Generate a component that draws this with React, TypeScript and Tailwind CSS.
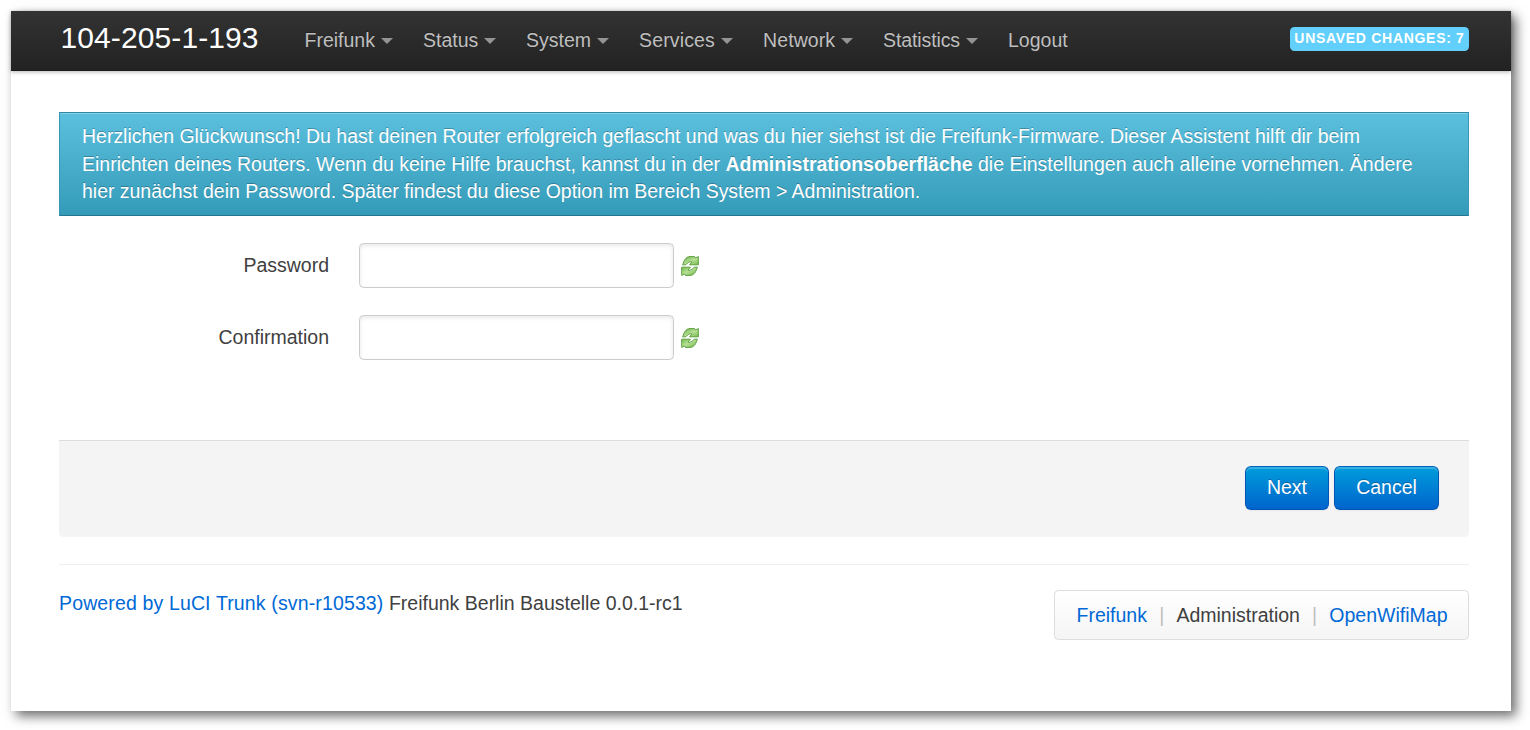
const menu = [
  { label: 'Freifunk', width: 'w-[118.500px]', tracking: '' },
  { label: 'Status', width: 'w-[103px]', tracking: '' },
  { label: 'System', width: 'w-[113px]', tracking: '' },
  { label: 'Services', width: 'w-[124px]', tracking: 'tracking-[0.150px]' },
  { label: 'Network', width: 'w-[120px]', tracking: 'tracking-[0.100px]' },
  { label: 'Statistics', width: 'w-[125px]', tracking: 'tracking-[-0.100px]' },
];

function Refresh() {
  const arrow = 'M1.600 8.800L3.400 4.400C4.600 2 6.300.7 9 .6H13.600L14.600 1.900L17.300.6V8.800H8.600L11 5.900C8.800 5.300 7 6.200 4.800 8.800z';
  return (
    <svg className="ml-[7px] h-[20px] w-[18px]" viewBox="0 0 18 20">
      <defs>
        <linearGradient id="leaf" x1="0" y1="0" x2="1" y2="1">
          <stop offset="0" stopColor="#6fb14b" />
          <stop offset=".55" stopColor="#b5e094" />
          <stop offset="1" stopColor="#74b94a" />
        </linearGradient>
      </defs>
      <g fill="url(#leaf)" stroke="#5f9f42" strokeWidth="1" strokeLinejoin="round">
        <path d={arrow} />
        <path d={arrow} transform="rotate(180 9 10)" />
      </g>
    </svg>
  );
}

function Field({ label }: { label: string }) {
  return (
    <div className="flex h-[45px] items-center">
      <label className="w-[270px] text-right">{label}</label>
      <input
        type="password"
        aria-label={label}
        className="ml-[30px] h-[45px] w-[315px] rounded-[4.500px] border border-[#ccc] bg-white px-2 shadow-[inset_0_1.500px_4.500px_rgba(0,0,0,0.100)] outline-none"
      />
      <Refresh />
    </div>
  );
}

function Button({ children, width }: { children: string; width: string }) {
  return (
    <button
      className={`${width} h-11 rounded-md border border-[#0055b5] border-t-[#0062bb] bg-linear-to-b from-[#049cdb] to-[#0064cd] pb-[2px] text-white shadow-[inset_0_2px_0_rgba(255,255,255,0.200),0_1px_2px_rgba(0,0,0,0.050)] [text-shadow:0_-1px_0_rgba(0,0,0,0.250)]`}
    >
      {children}
    </button>
  );
}

export default function App() {
  return (
    <div className="h-[730px] w-[1530px] overflow-hidden bg-white p-[11px] font-['Liberation_Sans',sans-serif] text-[19.500px] leading-[27px] text-[#404040]">
      <div className="h-[700px] w-[1500px] bg-white shadow-[5px_5px_11px_rgba(0,0,0,0.580)]">
        <header className="flex h-[60px] items-center bg-linear-to-b from-[#333] to-[#222] pr-[42px] pl-[49.500px] shadow-[0_1px_4px_rgba(0,0,0,0.300),inset_0_-1px_0_rgba(0,0,0,0.150)]">
          <h1 className="w-[244px] pb-[6px] text-[30px] leading-[30px] tracking-[0.100px] whitespace-nowrap text-white">104-205-1-193</h1>
          <nav className="flex pb-[2px] text-[#bfbfbf] [text-shadow:0_-1px_0_rgba(0,0,0,0.250)]">
            {menu.map(({ label, width, tracking }) => (
              <a key={label} className={`flex items-center ${width} ${tracking}`}>
                {label}
                <span className="mt-[2px] ml-[6px] h-0 w-0 border-x-[6px] border-t-[6px] border-x-transparent border-t-[#949494]" />
              </a>
            ))}
            <a>Logout</a>
          </nav>
          <span className="mb-[4px] ml-auto h-6 w-[179px] rounded-[4.500px] bg-[#62cffc] text-center text-[14px] leading-[23px] font-bold tracking-[0.700px] whitespace-nowrap text-white">
            UNSAVED CHANGES: 7
          </span>
        </header>

        <main className="ml-[48px] w-[1410px] pt-[41px]">
          <div className="h-[104px] border border-[#3596b5] border-t-[#2e87a3] border-b-[#22788f] bg-linear-to-b from-[#5bc0de] to-[#339bb9] pt-[10px] pl-[22px] leading-[27.500px] whitespace-nowrap text-white shadow-[inset_0_1px_0_rgba(255,255,255,0.250)] [text-shadow:0_-1px_0_rgba(0,0,0,0.250)]">
            <p className="tracking-[-0.014px]">Herzlichen Glückwunsch! Du hast deinen Router erfolgreich geflascht und was du hier siehst ist die Freifunk-Firmware. Dieser Assistent hilft dir beim</p>
            <p>Einrichten deines Routers. Wenn du keine Hilfe brauchst, kannst du in der <strong>Administrationsoberfläche</strong> die Einstellungen auch alleine vornehmen. Ändere</p>
            <p className="tracking-[-0.025px]">hier zunächst dein Password. Später findest du diese Option im Bereich System &gt; Administration.</p>
          </div>

          <form className="flex flex-col gap-[27px] pt-[27px]">
            <Field label="Password" />
            <Field label="Confirmation" />
          </form>

          <div className="mt-20 flex h-[97px] justify-end gap-[5px] rounded-b-[4.500px] border-t border-[#ddd] bg-[#f4f4f4] pt-[25px] pr-[30px]">
            <Button width="w-[84px]">Next</Button>
            <Button width="w-[105px]">Cancel</Button>
          </div>

          <footer className="mt-[27px] flex justify-between border-t border-[#eee] pt-[25px]">
            <p>
              <a className="tracking-[0.140px] text-[#0069d6]">Powered by LuCI Trunk (svn-r10533)</a> Freifunk Berlin Baustelle 0.0.1-rc1
            </p>
            <ul className="flex h-[50px] w-[415px] items-center justify-between rounded-[4.500px] border border-[#ddd] bg-linear-to-b from-white to-[#f5f5f5] pr-[20.500px] pl-[21.500px]">
              <li className="text-[#0069d6]">Freifunk</li>
              <li className="text-[#bfbfbf]">|</li>
              <li>Administration</li>
              <li className="text-[#bfbfbf]">|</li>
              <li className="text-[#0069d6]">OpenWifiMap</li>
            </ul>
          </footer>
        </main>
      </div>
    </div>
  );
}
